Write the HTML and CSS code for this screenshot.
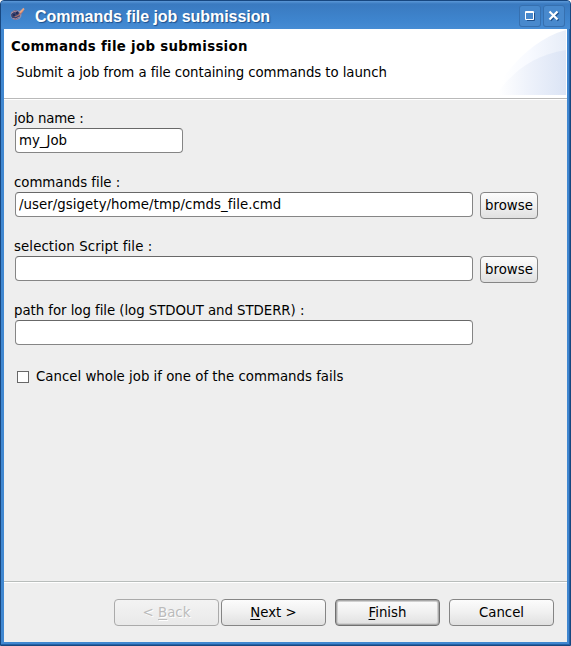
FILE: index.html
```html
<!DOCTYPE html>
<html lang="en">
<head>
<meta charset="utf-8">
<title>Commands file job submission</title>
<link rel="stylesheet" href="styles.css">
</head>
<body>
<div class="window">
  <div class="titlebar">
    <svg class="app-icon" width="18" height="18" viewBox="0 0 18 18">
      <ellipse cx="7" cy="10" rx="5.500" ry="5" fill="#8f8fae"/>
      <circle cx="6.500" cy="10" r="4.400" fill="#38426f"/>
      <path d="M2 8.500l3-2 3 .5M4 13.500l3 .5 3-2" stroke="#b08a98" fill="none"/>
      <path d="M5 11.500l4-1.500 3-3.500 3-2.500-1 3-3 3-4 2z" fill="#b9756a"/>
      <path d="M4 9h2v2H4zM7 7h2v2H7z" fill="#222c58"/>
      <path d="M11 7.500l4-4" stroke="#e8a585" stroke-width="1.800"/>
    </svg>
    <div class="title">Commands file job submission</div>
    <div class="control"><svg width="22" height="22" viewBox="0 0 22 22"><path d="M15.500 8v7.500H8" fill="none" stroke="#1d4f8b"/><path d="M6.500 6.500h8v8h-8z" fill="none" stroke="#fff"/><path d="M6 7.500h9" stroke="#fff"/></svg></div>
    <div class="control"><svg width="22" height="22" viewBox="0 0 22 22"><path d="M7.500 7.500l8 8m0-8l-8 8" stroke="#1d4f8b" stroke-width="2"/><path d="M6.500 6.500l8 8m0-8l-8 8" stroke="#fff" stroke-width="2.200"/></svg></div>
  </div>
  <div class="client">
    <header class="header">
      <div class="header-text">
        <h1>Commands file job submission</h1>
        <p>Submit a job from a file containing commands to launch</p>
      </div>
      <svg class="banner" width="75" height="66" viewBox="0 0 75 66">
        <defs>
          <linearGradient id="outer" gradientUnits="userSpaceOnUse" x1="0" x2="75" y1="0" y2="0"><stop offset="0.15" stop-color="#fff"/><stop offset="0.5" stop-color="#f8faff"/><stop offset="1" stop-color="#e7edf8"/></linearGradient>
          <linearGradient id="inner" gradientUnits="userSpaceOnUse" x1="0" x2="75" y1="0" y2="0"><stop offset="0.1" stop-color="#fff"/><stop offset="0.5" stop-color="#eef2fb"/><stop offset="1" stop-color="#dbe4f5"/></linearGradient>
        </defs>
        <path d="M0 66C18 38 42 10 75 1v65z" fill="url(#outer)"/>
        <path d="M5 66C20 44 42 26 75 21v45z" fill="url(#inner)"/>
      </svg>
    </header>
    <main class="form">
      <div class="field">
        <label for="job">job name :</label>
        <div class="row"><input id="job" class="short" type="text" value="my_Job"></div>
      </div>
      <div class="field">
        <label for="cmd">commands file :</label>
        <div class="row"><input id="cmd" class="path" type="text" value="/user/gsigety/home/tmp/cmds_file.cmd"><button class="browse">browse</button></div>
      </div>
      <div class="field">
        <label for="sel" class="wide">selection Script file :</label>
        <div class="row"><input id="sel" type="text"><button class="browse">browse</button></div>
      </div>
      <div class="field">
        <label for="log" class="tight">path for log file (log STDOUT and STDERR) :</label>
        <div class="row"><input id="log" type="text"></div>
      </div>
      <label class="check"><input type="checkbox"><span>Cancel whole job if one of the commands fails</span></label>
    </main>
    <footer class="footer">
      <button disabled>&lt; <u>B</u>ack</button>
      <button class="next"><u>N</u>ext &gt;</button>
      <button class="default"><u>F</u>inish</button>
      <button>Cancel</button>
    </footer>
  </div>
</div>
</body>
</html>
```
FILE: styles.css
```css
* { box-sizing: border-box; }
body {
  margin: 0;
  background: #fff;
  font: 13.33px/16px "DejaVu Sans", sans-serif;
  color: #000;
}
.window {
  width: 571px;
  height: 646px;
  padding: 0 3px 3px;
  border: 1px solid #174780;
  border-radius: 4px 4px 0 0;
  background: #4087d0;
  box-shadow: inset -1px -1px #2461a6;
  display: flex;
  flex-direction: column;
}
.titlebar {
  height: 28px;
  margin: 0 -3px;
  padding: 3px 4px 0 7px;
  display: flex;
  border-radius: 3px 3px 0 0;
  background: linear-gradient(#5b98d8 0, #3a7ac0 3px, #3e84cd 18px, #468cd4);
}
.app-icon { margin: 1px 0 0 1px; }
.title {
  flex: 1;
  margin-left: 8px;
  font: bold 16px/25px "Liberation Sans", sans-serif;
  letter-spacing: -0.05px;
  color: #fff;
  text-shadow: 1px 1px 1px #1d4f8b;
  white-space: nowrap;
}
.control {
  width: 22px;
  height: 22px;
  margin: 1px 1px 0;
  border-radius: 3px;
  background: #4889cd;
  box-shadow: inset 0 0 0 1px #3670b0;
}
.control svg { display: block; }
.client {
  flex: 1;
  background: #eee;
  display: flex;
  flex-direction: column;
}
.header {
  height: 70px;
  display: flex;
  background: #fff;
  border-bottom: 1px solid #b9b9b9;
  box-shadow: 0 1px #fff;
}
.header-text { flex: 1; padding: 10px 0 0 7px; }
h1 { margin: 0; font-size: 13.33px; line-height: 16px; letter-spacing: 0.3px; }
p { margin: 10px 0 0 5px; letter-spacing: -0.075px; }
.banner { margin-right: 1px; }
.form { flex: 1; padding: 12px 10px 0; }
.field { height: 64px; }
.field label { display: block; height: 17px; letter-spacing: -0.04px; }
.field:first-child label { letter-spacing: -0.15px; }
.field .wide { letter-spacing: 0.1px; }
.field .tight { letter-spacing: -0.05px; }
.row { display: flex; align-items: flex-start; margin-left: 1px; }
input[type=text] {
  width: 458px;
  height: 25px;
  margin: 0;
  padding: 0 3px 1px;
  border: 1px solid #858585;
  border-top-color: #686868;
  border-radius: 4px;
  background: #fff;
  font: inherit;
  color: #000;
}
input.short { width: 168px; }
input.path { letter-spacing: 0.05px; }
button {
  height: 27px;
  padding: 0;
  border: 1px solid #858585;
  border-radius: 4px;
  background: linear-gradient(#fcfcfc, #f0f0f0 50%, #e0e0e0);
  font: inherit;
  color: #000;
}
.browse { width: 58px; margin-left: 7px; }
.check { display: flex; align-items: center; height: 18px; margin: 1px 0 0 3px; }
.check input {
  appearance: none;
  width: 12px;
  height: 12px;
  margin: 0 7px 0 0;
  border: 1px solid #686868;
  background: #fff;
}
.footer {
  height: 61px;
  padding: 17px 13px 0;
  border-top: 1px solid #b8bdbb;
  box-shadow: inset 0 1px #fff;
  display: flex;
  justify-content: flex-end;
  gap: 9px;
}
.footer button { width: 105px; }
.footer .next { margin-left: -7px; }
.footer button:disabled {
  color: #bbb;
  border-color: #aaa;
  background: linear-gradient(#f3f3f3, #e9e9e9);
  text-shadow: 1px 1px #fff;
}
.footer .default {
  border-color: #707070;
  box-shadow: inset 0 0 0 1px #a8a8a8, inset 0 0 0 2px #d0d0d0, inset 0 -2px #aaa;
}
u { text-underline-offset: 2px; text-decoration-thickness: 1px; }
```
